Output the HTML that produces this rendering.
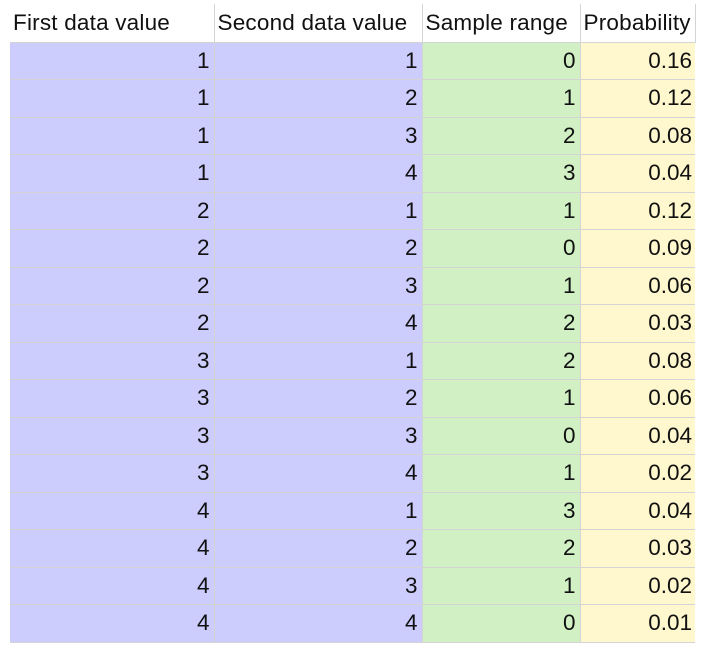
<!DOCTYPE html>
<html><head><style>
body{margin:0;background:#fff;width:712px;height:657px;overflow:hidden;font-family:"Liberation Sans",Arial,sans-serif;}
table{position:absolute;left:10px;top:4px;border-collapse:collapse;font-size:22.5px;color:#111;table-layout:fixed;}
td{border:1px solid #d4d4d4;padding:0 4px 0 0;height:37.5px;text-align:right;white-space:nowrap;box-sizing:border-box;overflow:hidden;}
tr.h td{text-align:left;background:#fff;height:38px;border-top:none;padding:0 0 0 3px;letter-spacing:0.2px}
col.a{width:204px}col.b{width:208px}col.c{width:158px}col.d{width:115px}
tr:not(.h) td:nth-child(1),tr:not(.h) td:nth-child(2){background:#ccccfd}
tr:not(.h) td:nth-child(3){background:#d1f1c5}
tr:not(.h) td:nth-child(4){background:#fff7cd;border-right:none;padding-right:3px}
tr td:first-child{border-left:none}
</style></head><body>
<table>
<colgroup><col class="a"><col class="b"><col class="c"><col class="d"></colgroup>
<tr class="h"><td>First data value</td><td>Second data value</td><td>Sample range</td><td>Probability</td></tr>
<tr><td>1</td><td>1</td><td>0</td><td>0.16</td></tr>
<tr><td>1</td><td>2</td><td>1</td><td>0.12</td></tr>
<tr><td>1</td><td>3</td><td>2</td><td>0.08</td></tr>
<tr><td>1</td><td>4</td><td>3</td><td>0.04</td></tr>
<tr><td>2</td><td>1</td><td>1</td><td>0.12</td></tr>
<tr><td>2</td><td>2</td><td>0</td><td>0.09</td></tr>
<tr><td>2</td><td>3</td><td>1</td><td>0.06</td></tr>
<tr><td>2</td><td>4</td><td>2</td><td>0.03</td></tr>
<tr><td>3</td><td>1</td><td>2</td><td>0.08</td></tr>
<tr><td>3</td><td>2</td><td>1</td><td>0.06</td></tr>
<tr><td>3</td><td>3</td><td>0</td><td>0.04</td></tr>
<tr><td>3</td><td>4</td><td>1</td><td>0.02</td></tr>
<tr><td>4</td><td>1</td><td>3</td><td>0.04</td></tr>
<tr><td>4</td><td>2</td><td>2</td><td>0.03</td></tr>
<tr><td>4</td><td>3</td><td>1</td><td>0.02</td></tr>
<tr><td>4</td><td>4</td><td>0</td><td>0.01</td></tr>
</table>
</body></html>
